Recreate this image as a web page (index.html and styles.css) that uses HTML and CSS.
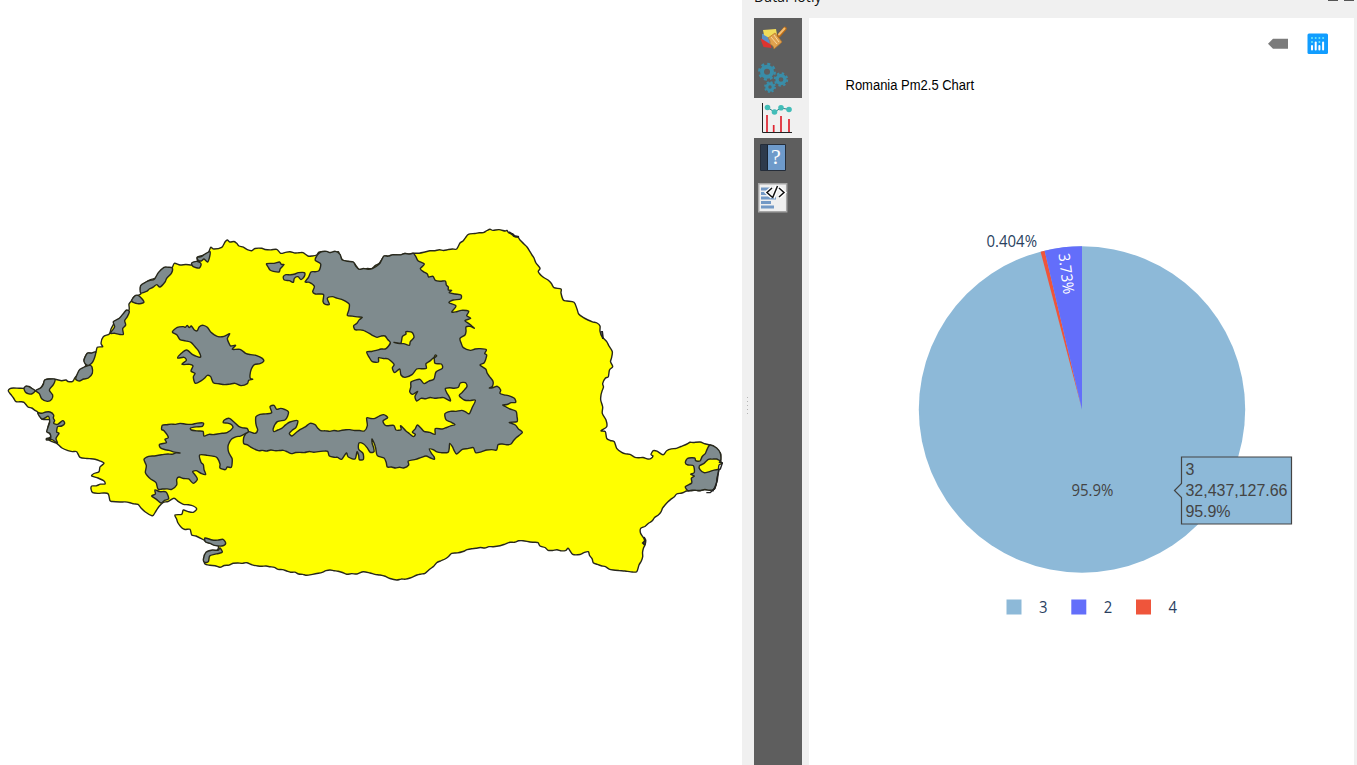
FILE: index.html
```html
<!DOCTYPE html>
<html lang="en">
<head>
<meta charset="utf-8">
<title>DataPlotly</title>
<link rel="stylesheet" href="styles.css">
</head>
<body>
<div class="app">
<main class="map-pane">
<svg class="map" width="742" height="765" viewBox="0 0 742 765">
<path class="land" d="M8.3 391L10 388.6 13.3 388 25 388.3 29 386.5 35 390.7 40.7 387.7 45 380 48 379 55 379.3 61.7 380.7 66 380 68 381.5 72.7 381.3 75 377.7 80 371.7 86 365 84 360 87.3 353.3 95.7 352.7 97.3 347.3 102.7 346.7 101 343.3 103.3 336.7 109.3 334 111 329 115 321.7 123.3 315 129 310 129 304 134 296.7 140.7 294 140.7 286.7 146.7 281.7 155 278.3 165 267.7 171.7 268.3 174.3 263.3 180 265 191.7 265 192.7 263.3 197.3 261.7 197.3 257.3 208.3 252.7 210.7 247.3 214 249 221.7 247.3 225 242 227.3 240 230 242 234 241.5 236.7 243.3 239 246 251.7 250.7 255 248.5 261.7 248.3 265 249.5 276.7 249.3 280.7 253.3 290 251.7 295 253 303 252.7 308 256 316.7 255 319 252 322.7 251.7 330 252.5 338.3 251.7 342.7 260 353.3 262.3 359 269.3 371.7 268.7 379.3 263.3 384 256 413.3 253.3 425 252 435 250.7 456.7 249 460 243 463 241 468.3 234.3 475 233.5 483.3 232.7 487 230.5 490 229.3 493 230.4 499 229.6 505 231 507 230.5 509 233 513 234 515 236.7 518 237 520 240 524 244 527 247 530 251.7 532 255 534 258 536 263 540 268.3 538.3 271.7 543 277 548 280 554 287.7 561 289 561 293 563.3 300 567 301 574 302.3 577 309 578.7 314 588 320 597 323 600 326 600 331 602 336.7 606.7 341.7 609 346 612.3 351.7 611.5 358 610.5 361.7 612.7 366.7 609.5 370 608.3 376.7 605.5 378 602.7 383.3 603.5 387 601 395 600.7 400 602.7 407 602.3 413.3 606 420 606.7 426.7 601 430.7 605.3 431.7 606.7 438.3 614.3 441.7 616.7 448.3 621.7 452.3 630 454.3 635 457.3 643 457.5 648 459 650.7 458.7 653 456 651 454.5 653.3 450.7 657 451.2 663 454.8 666.7 450.7 681 446.5 687 444 690 442.3 693.3 442.5 700 442 710 445 716 448 718.3 450.7 720.7 454 720.7 461 722.3 463.3 719 465 718.3 471.7 715 488.3 713 489.5 686.7 491 676.7 494 665 505 658.3 515 645 526.5 640.7 528.3 640.5 533 643 537 645.7 540 645 545 643.5 548 642.7 556.7 639 565 636.7 571.7 625 571 613.3 570 593.3 562.7 588.3 551.7 580 554.5 572.7 554.3 568.3 548.3 566 550.3 548 550.3 545 547.5 540 546 538 542.7 530 542 523 540.7 510 542.3 500 545.7 493.3 546.7 471.7 548.7 463 551.5 451.7 553.3 445 559 436.7 562.7 430 569 425 573.3 417 575 410 578 396.7 580 390 578.5 380 575 370 573 363.3 571.7 357 574 346.7 574.3 338 571.2 330 570 318.3 573.3 306.7 575.3 286.7 571 270 566.7 258 566 246.7 562.7 233.3 563.3 220 567.3 205 564 204 558.3 210 551.7 217.3 550 218.3 546 206.7 542 203 539.5 196 536 191.7 535 190 529.3 185 529.5 181.7 527.7 178 523 175 515 181.7 514.3 183.3 510 193.3 512.3 196.7 509 193.3 506 183.3 504.3 174 498.3 168 501.5 163.3 502.3 156 511 153.5 515 151.7 515.7 145 511.7 141 508 138 504.3 130 502.7 120 502 112.5 501.5 110 500.7 108.3 494 104 493 92.7 492.7 91 489 91.7 486 105 484 104 481 98 478 91.7 476 94 473.5 99 471.7 100 467 104 463.3 95 459.3 87 458.5 80 457.3 76.7 451.7 68 450.7 62 448 56.7 443.3 48 439 51 436 47.7 430 50 420 41.7 419 38.3 412.7 31.7 408 28 407 24 402.3 16 401.7 13.5 398Z"/>
<g class="zone zone-west" transform="translate(0 230) scale(.33333)">
<path d="M72 475L80 468 92 473 105 482 95 492 78 488ZM107 482L122 474 130 463 134 450 150 447 165 448 160 464 148 480 158 495 155 508 142 514 125 506 118 491ZM113 549L150 546 161 555 160 564 164 572 161 580 173 583 188 572 194 580 185 588 173 590 170 606 177 610 168 625 172 639 155 628 140 630 140 625 152 624 150 611 140 605 145 589 149 576 145 559 126 567ZM227 447L240 418 258 409 270 406 276 411 277 430 265 444 238 453ZM252 390L262 370 287 366 282 388 275 400 265 406 256 402ZM330 310L344 290 340 275 358 265 372 248 380 240 388 245 382 260 374 272 377 285 368 296 370 313 345 310ZM395 213L407 196 420 200 432 217 412 221ZM422 189L422 167 438 156 463 148 475 128 492 112 517 114 514 130 500 145 495 156 480 171 470 164 448 177 440 184Z"/>
</g>
<g class="zone zone-north" transform="translate(140 230) scale(.33333)">
<path d="M155 99L170 94 183 101 178 114 160 110ZM172 82L184 80 195 72 210 65 209 80 203 96 192 87 184 93 174 90ZM380 101L402 100 418 96 424 103 432 104 421 116 417 126 400 124 390 120 385 112ZM430 140L438 134 465 132 475 128 493 128 493 139 483 149 474 140 463 145 460 157 448 152 433 150ZM97 306L112 292 130 290 136 292 142 286 148 293 154 288 163 300 172 302 178 290 190 286 202 292 213 307 234 320 252 319 269 311 262 326 267 340 272 348 287 346 277 358 300 358 317 370 348 376 367 385 371 394 360 401 343 404 334 417 330 435 331 445 338 448 326 451 322 461 303 467 285 460 254 464 220 458 212 440 202 436 195 443 184 452 166 460 160 441 165 430 153 423 159 408 149 403 126 403 139 391 132 382 113 384 124 370 140 360 158 374 182 381 175 362 164 349 153 337 120 329 111 315Z"/>
</g>
<g class="zone zone-center" transform="translate(300 220) scale(.33333)">
<path d="M50 108L62 96 80 94 89 98 106 94 120 103 126 119 160 126 177 148 217 146 237 133 252 108 340 100 354 122 373 132 361 146 370 155 382 162 386 171 399 169 406 181 436 183 439 195 445 201 445 210 455 211 448 218 483 225 482 237 460 240 447 248 468 258 455 276 484 271 506 274 500 287 512 295 495 302 523 325 510 319 498 321 495 345 480 355 490 383 511 391 540 386 559 389 554 400 560 405 552 429 540 435 557 447 568 469 579 484 577 499 568 504 592 499 602 510 600 520 625 527 643 535 647 547 608 555 630 567 648 574 651 605 628 607 646 615 667 637 650 652 633 672 594 674 590 690 560 690 527 698 520 683 487 688 470 702 449 670 444 697 423 698 388 687 402 710 403 718 378 708 347 718 325 723 326 735 311 744 262 741 252 714 232 707 227 684 216 657 222 695 211 697 191 672 177 669 176 688 189 700 190 718 178 719 171 695 165 717 145 711 139 699 125 718 113 712 105 712 88 708 83 694 0 697 -26 701 -50 691 -125 692 -145 683 -169 670 -168 650 -155 635 -135 640 -127 630 -133 605 -132 590 -120 583 -85 578 -90 560 -78 556 -70 568 -58 565 -35 575 -37 588 -45 600 -68 605 -80 625 -78 635 -55 625 -30 606 -7 602 -12 622 -32 640 -24 648 0 629 30 610 45 614 62 632 90 634 150 629 193 633 202 617 200 594 225 595 251 584 263 593 249 603 258 617 281 616 288 630 303 629 302 617 317 632 340 650 346 643 337 636 352 615 372 634 405 643 406 626 427 627 465 614 438 599 435 581 451 574 485 571 508 581 517 562 526 541 493 540 478 527 501 499 496 488 481 489 475 502 436 506 451 543 431 533 363 535 350 543 345 529 353 514 338 523 329 515 333 486 360 478 372 491 402 477 408 456 427 445 424 432 405 430 402 413 378 431 379 445 350 447 336 464 315 472 303 465 299 447 284 458 277 444 282 433 265 417 236 413 235 426 217 425 200 396 258 386 271 369 255 348 231 352 208 340 190 331 165 329 161 317 187 292 142 286 148 253 125 238 97 230 82 235 88 253 76 253 69 245 71 224 46 222 38 215 43 199 28 187 15 186 33 156 57 152 62 132 46 121Z"/>
<path class="hole" d="M282 367L302 370 307 350 318 342 318 335 336 337 342 352 331 365 328 376 311 371ZM402 414L406 405 410 408Z"/>
</g>
<g class="zone zone-south" transform="translate(130 380) scale(.33333)">
<path d="M42 238L56 229 90 225 150 219 117 211 91 203 89 193 109 188 105 178 115 172 102 152 95 149 97 136 150 130 185 133 220 129 217 139 182 144 184 150 219 154 222 168 237 163 262 162 291 158 308 144 305 134 280 128 283 120 298 115 312 126 326 139 351 145 355 155 344 162 305 177 294 199 296 217 306 235 304 262 292 261 286 269 270 264 270 252 262 234 252 229 232 226 209 225 213 247 220 254 227 283 215 281 199 272 188 275 202 298 190 310 176 297 147 291 140 298 140 315 125 328 84 327 78 308 62 297 46 277 49 257ZM65 348L76 342 75 330 90 335 108 336 116 356 93 369ZM225 474L247 480 279 478 287 490 276 498 253 496 227 486ZM220 538L228 517 247 510 264 511 270 504 277 516 253 523 239 528 235 545 224 547Z"/>
</g>
<g class="zone zone-delta" transform="translate(660 430) scale(.33333)">
<path d="M76 98L83 85 104 84 107 92 120 93 150 45 170 54 181 70 182 91 170 87 145 88 132 100 118 108 120 119 132 128 160 121 176 119 170 157 160 179 84 182 76 170 95 159 94 145 103 138 92 133 103 127 100 107 84 105Z"/>
<path class="coast" d="M182 91L178 97 187 99 181 117 176 119 172 151 163 177 150 188 139 188M164 173L158 184"/>
</g>
<path class="coast heavy" d="M644 537l1 4-2 2 2 2M509 232l4 3 1 1 5 1M602 331l1 8"/>
</svg>
</main>
<div class="splitter"><i></i><i></i><i></i><i></i><i></i></div>
<aside class="dock">
<header class="dock-title"><span>DataPlotly</span><b></b><b></b></header>
<div class="dock-body">
<nav class="tabs">
<div class="tab"><svg width="38" height="40" viewBox="0 0 38 40"><path fill="#dd3430" d="M6.500 21l8-1 3 10-8-1z"/><path fill="#5b8fc6" d="M8 16l7-1 5 9-4 2-8-5z"/><path fill="#f2dc5a" d="M9 12l13-1 1 6-6 4-7-4z"/><path fill="#e0a14e" stroke="#b87628" stroke-width=".7" d="M14 20l7-5 7 9-8 7q0-3-4-5 1-3-2-6z"/><path stroke="#b86b17" stroke-width="3.600" stroke-linecap="round" d="M25 17.500l6-7"/><path stroke="#f4bd6f" stroke-width="2" stroke-linecap="round" d="M25 16.500l5.500-6"/><path stroke="#ffe4b0" stroke-width=".8" d="M17 19l6 7M20 17l5 7"/></svg></div>
<div class="tab"><svg width="38" height="40" viewBox="0 0 38 40" fill="none" stroke="#398da8"><circle cx="13" cy="13.700" r="5" stroke-width="4"/><circle cx="13" cy="13.700" r="7.700" stroke-width="2.500" stroke-dasharray="3 3.050"/><circle cx="27" cy="21.500" r="4" stroke-width="3.300"/><circle cx="27" cy="21.500" r="6.200" stroke-width="2" stroke-dasharray="2.400 2.470"/><circle cx="16" cy="29" r="3.200" stroke-width="3"/><circle cx="16" cy="29" r="5" stroke-width="1.800" stroke-dasharray="2 1.930"/></svg></div>
<div class="tab active"><svg width="38" height="40" viewBox="0 0 38 40"><path fill="none" stroke="#222" d="M8.500 5v29.500H38"/><path stroke="#df2430" stroke-width="1.700" d="M13 17v17M19.700 27v7M27 18v16M35 21v13"/><path fill="none" stroke="#287b82" d="M13.500 9.500l7 4.500 6.500-4 8 1.500"/><g fill="#42bdb8"><circle cx="13.500" cy="9.500" r="2.800"/><circle cx="20.500" cy="14" r="2.800"/><circle cx="27" cy="9.700" r="2.800"/><circle cx="35" cy="11.500" r="2.800"/></g></svg></div>
<div class="tab"><svg width="38" height="40" viewBox="0 0 38 40"><path fill="#6e9aca" stroke="#252d39" d="M6.500 6.500h25v26h-25z"/><path fill="#2d3a4c" d="M7 7h6v25H7z"/><path stroke="#182433" d="M13.500 7v25"/><text x="22" y="26" class="help">?</text></svg></div>
<div class="tab"><svg width="38" height="40" viewBox="0 0 38 40"><path fill="#efefef" stroke="#a5a5a5" stroke-width="1.500" d="M4.700 5.700h28v28h-28z"/><path stroke="#7399c5" stroke-width="3" d="M7 11h11M7 15.500h7M7 20h15M7 24.500h10M7 29h13"/><path fill="none" stroke="#fff" stroke-width="4" d="M18 10l-5 4.500 5 4.500M23 8l-4 12M25 10l5 4.500-5 4.500"/><path fill="none" stroke="#111" stroke-width="1.500" d="M18 10l-5 4.500 5 4.500M23.500 8l-5 12M25 10l5 4.500-5 4.500"/></svg></div>
</nav>
<section class="plot">
<svg width="545" height="747" viewBox="809 18 545 747">
<path fill="#7b7b7b" d="M1268 43.800l5-5h15v10h-15z"/>
<rect x="1307.500" y="33.500" width="20.500" height="20.500" rx="1.500" fill="#119dff"/>
<g fill="#fff"><rect x="1311" y="45" width="2" height="5.500" rx="1"/><rect x="1314.700" y="41.500" width="2" height="9" rx="1"/><rect x="1318.400" y="45" width="2" height="5.500" rx="1"/><rect x="1322.100" y="41.500" width="2" height="9" rx="1"/></g>
<g fill="#6fe8f5"><circle cx="1312" cy="38" r="1"/><circle cx="1312" cy="42" r="1"/><circle cx="1315.700" cy="38" r="1"/><circle cx="1319.400" cy="38" r="1"/><circle cx="1319.400" cy="42" r="1"/><circle cx="1323.100" cy="38" r="1"/></g>
<text class="title" x="845.500" y="90" textLength="128.500" lengthAdjust="spacingAndGlyphs">Romania Pm2.5 Chart</text>
<circle cx="1082" cy="409.500" r="163.200" fill="#8db9d8"/>
<path fill="#ef553b" d="M1082 409.500L1040.600 251.700 1044.600 250.700z"/>
<path fill="#636efa" d="M1082 409.500L1044.600 250.700A163.200 163.200 0 0 1 1082 246.300z"/>
<text class="label" x="986.500" y="247" textLength="50.500" lengthAdjust="spacingAndGlyphs">0.404%</text>
<text class="label light" transform="translate(1058.500 254) rotate(83)" x="0" y="0" textLength="41" lengthAdjust="spacingAndGlyphs">3.73%</text>
<text class="label dark" x="1071.500" y="496" textLength="42" lengthAdjust="spacingAndGlyphs">95.9%</text>
<path class="hover" d="M1174.500 490.500l7-7v-26.500h110v67h-110v-26.500z"/>
<g class="hover-text"><text x="1185.500" y="475">3</text><text x="1185.500" y="496" textLength="102">32,437,127.66</text><text x="1185.500" y="517" textLength="45">95.9%</text></g>
<rect x="1006.500" y="599.500" width="15" height="15" fill="#8db9d8"/><rect x="1071.300" y="599.500" width="15" height="15" fill="#636efa"/><rect x="1136" y="599.500" width="15" height="15" fill="#ef553b"/>
<text class="label" x="1039" y="613" textLength="8.500" lengthAdjust="spacingAndGlyphs">3</text><text class="label" x="1103.700" y="613" textLength="8.500" lengthAdjust="spacingAndGlyphs">2</text><text class="label" x="1168.500" y="613" textLength="8.500" lengthAdjust="spacingAndGlyphs">4</text>
</svg>
</section>
</div>
</aside>
</div>
<script src="map.js"></script>
</body>
</html>
```
FILE: styles.css
```css
body { margin: 0; overflow: hidden; background: #fff; }
svg { display: block; }
.app { display: flex; width: 1357px; height: 765px; }
.map-pane { width: 742px; background: #fff; }
.land, .zone path { stroke: #28281c; stroke-width: 1.4; stroke-linejoin: round; vector-effect: non-scaling-stroke; }
.land { fill: #ff0; }
.zone path { fill: #7f8b8e; }
.zone .hole { fill: #ff0; }
.zone .coast, .coast { fill: none; stroke: #222; }
.heavy { stroke-width: 2; }
.splitter { width: 12px; background: #f0f0f0; display: flex; flex-direction: column; justify-content: center; gap: 3px; padding-top: 46px; box-sizing: border-box; }
.splitter i { width: 1px; height: 1px; margin-left: 5px; background: #b5b5b5; }
.dock { width: 603px; background: #f0f0f0; display: flex; flex-direction: column; }
.dock-title { height: 18px; display: flex; gap: 6px; padding-right: 3px; overflow: hidden; font: 14px/16px "Open Sans", sans-serif; color: #111; }
.dock-title span { flex: 1; margin-top: -11px; letter-spacing: .1px; }
.dock-title b { width: 10px; height: 1px; background: #555; }
.dock-body { flex: 1; display: flex; gap: 7px; }
.tabs { width: 48px; background: #5e5e5e; }
.tab { height: 40px; }
.active { background: #f0f0f0; }
.help { font: 22px "Liberation Serif", serif; fill: #fff; text-anchor: middle; }
.plot { width: 545px; background: #fff; }
.title { font: 14px "Liberation Sans", sans-serif; fill: #000; }
.label { font: 15.5px "Open Sans", sans-serif; fill: #2a3f5f; }
.light { fill: #fff; }
.dark { fill: #444; }
.hover { fill: #8db9d8; stroke: #444; stroke-width: 1.2; }
.hover-text { font: 16px "Liberation Sans", sans-serif; fill: #444; }
```
FILE: map.js
```js
// Smooths the boundary polygons and adds fine irregularity to long border segments.
function smoothRing(points, unit) {
  const dense = [];
  points.forEach((p, i) => {
    const q = points[(i + 1) % points.length];
    const dx = q[0] - p[0], dy = q[1] - p[1], len = Math.hypot(dx, dy);
    dense.push(p);
    const n = Math.floor(len / (4 * unit));
    for (let k = 1; k < n; k++) {
      const t = k / n;
      const off = Math.sin(p[0] * 12.9 + p[1] * 7.3 + k * 2.4) * 0.55 * unit;
      dense.push([p[0] + dx * t - dy / len * off, p[1] + dy * t + dx / len * off]);
    }
  });
  const n = dense.length;
  const at = i => dense[(i + n) % n];
  let d = 'M' + dense[0].join(' ');
  for (let i = 0; i < n; i++) {
    const a = at(i - 1), b = at(i), c = at(i + 1), e = at(i + 2);
    const r = 7;
    d += 'C' + [b[0] + (c[0] - a[0]) / r, b[1] + (c[1] - a[1]) / r,
      c[0] - (e[0] - b[0]) / r, c[1] - (e[1] - b[1]) / r, c[0], c[1]].join(' ');
  }
  return d + 'Z';
}
document.querySelectorAll('.land, .zone path:not(.coast)').forEach(path => {
  const unit = path.classList.contains('land') ? 1 : 3;
  const rings = path.getAttribute('d').split('Z').filter(s => s.trim());
  path.setAttribute('d', rings.map(ring => {
    const v = ring.match(/-?\d+(\.\d+)?/g).map(Number);
    const points = [];
    for (let i = 0; i < v.length; i += 2) points.push([v[i], v[i + 1]]);
    return smoothRing(points, unit);
  }).join(''));
});
```
